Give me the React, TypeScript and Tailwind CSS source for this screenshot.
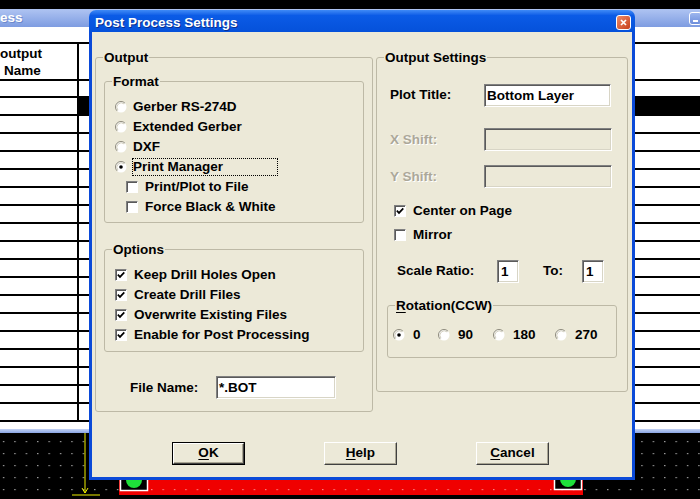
import React from "react"

// Classic sunken radio button (Win2k/XP classic look)
function Radio({ checked = false }: { checked?: boolean }) {
	return (
		<svg width="12" height="12" viewBox="0 0 12 12" className="shrink-0">
			<circle cx="6" cy="6" r="5.5" fill="#fff" />
			<path d="M2.1 9.9A5.5 5.5 0 0 1 9.9 2.1" fill="none" stroke="#8d8a7c" />
			<path d="M2.9 9.1A4.4 4.4 0 0 1 9.1 2.9" fill="none" stroke="#d2cfbf" />
			{checked && <circle cx="6" cy="6" r="1.8" fill="#000" />}
		</svg>
	)
}

function Check({ checked = false }: { checked?: boolean }) {
	return (
		<span className="w-[12px] h-[12px] shrink-0 flex items-center justify-center bg-white border border-t-[#808080] border-l-[#808080] border-r-white border-b-white shadow-[inset_1px_1px_0_#5a5a5a]">
			{checked && (
				<svg width="8" height="8" viewBox="0 0 8 8">
					<path d="M0.8 3.6L3 5.9L7.3 1.4" fill="none" stroke="#000" strokeWidth="1.7" />
				</svg>
			)}
		</span>
	)
}

function Edit({ value = "", disabled = false, className = "" }: { value?: string; disabled?: boolean; className?: string }) {
	return (
		<div
			className={`h-[23px] shrink-0 flex items-center px-[2px] pt-[1px] border border-t-[#808080] border-l-[#808080] border-r-white border-b-white shadow-[inset_1px_1px_0_#5a5a5a,inset_-1px_-1px_0_#d8d5c6] ${
				disabled ? "bg-[#ece9d8]" : "bg-white"
			} ${className}`}>
			{value}
		</div>
	)
}

function Group({
	label,
	className = "",
	legendClassName = "",
	children,
}: {
	label: React.ReactNode
	className?: string
	legendClassName?: string
	children: React.ReactNode
}) {
	return (
		<fieldset className={`border border-[#bdb9a6] rounded-[3px] ${className}`}>
			<legend className={`leading-[15px] px-[1px] ${legendClassName}`}>{label}</legend>
			{children}
		</fieldset>
	)
}

function RadioRow({ label, checked = false }: { label: string; checked?: boolean }) {
	return (
		<div className="h-[20px] flex items-center gap-[6px]">
			<Radio checked={checked} />
			<span>{label}</span>
		</div>
	)
}

function CheckRow({ label, checked = false, className = "" }: { label: string; checked?: boolean; className?: string }) {
	return (
		<div className={`h-[20px] flex items-center gap-[7px] ${className}`}>
			<Check checked={checked} />
			<span>{label}</span>
		</div>
	)
}

function Button({ children, isDefault = false }: { children: React.ReactNode; isDefault?: boolean }) {
	return (
		<button type="button" className={`w-[73px] h-[23px] flex bg-[#ece9d8] font-bold ${isDefault ? "border border-black" : ""}`}>
			<span className="flex-1 flex items-center justify-center border border-t-white border-l-white border-r-[#404040] border-b-[#404040] shadow-[inset_-1px_-1px_0_#a9a593]">
				{children}
			</span>
		</button>
	)
}

function CloseButton() {
	return (
		<span className="mt-[3px] w-[15px] h-[15px] rounded-[3px] border border-white bg-linear-to-br from-[#ee8a66] to-[#c63d17] flex items-center justify-center">
			<svg width="7" height="7" viewBox="0 0 7 7">
				<path d="M1 1L6 6M6 1L1 6" stroke="#fff" strokeWidth="1.7" />
			</svg>
		</span>
	)
}

const ROTATION_WIDTHS = ["w-[45px]", "w-[55px]", "w-[62px]", ""]

function Dialog() {
	return (
		<div className="absolute left-[89px] top-[10px] w-[546px] h-[470px] flex flex-col">
			<div className="h-[22px] shrink-0 rounded-t-[7px] bg-linear-to-b from-[#3f8af6] via-[#0b5be6] via-25% to-[#0551da] flex items-center justify-between pl-[6px] pr-[4px] text-white">
				<span className="pt-[4px] [text-shadow:1px_1px_0_#0b2f8f]">Post Process Settings</span>
				<CloseButton />
			</div>
			<div className="flex-1 flex flex-col bg-[#ece9d8] border-x-[3px] border-b-[3px] border-[#0b4ad8]">
				<div className="flex items-start gap-[3px] pl-[3px] pt-[18px]">
					{/* left: Output */}
					<Group label="Output" className="w-[278px] h-[362px] shrink-0 px-[8px] pt-[9px]" legendClassName="-ml-[1px]">
						<Group label="Format" className="pl-[10px] pt-[8px] pb-[5px]" legendClassName="-ml-[3px]">
							<RadioRow label="Gerber RS-274D" />
							<RadioRow label="Extended Gerber" />
							<RadioRow label="DXF" />
							<div className="h-[20px] flex items-center">
								<Radio checked />
								<span className="ml-[5px] w-[146px] h-[18px] flex items-center border border-dotted border-black">Print Manager</span>
							</div>
							<CheckRow label="Print/Plot to File" className="pl-[11px]" />
							<CheckRow label="Force Black & White" className="pl-[11px]" />
						</Group>
						<Group label="Options" className="mt-[19px] pl-[10px] pt-[8px] pb-[6px]" legendClassName="-ml-[3px]">
							<CheckRow checked label="Keep Drill Holes Open" className="gap-[6px]" />
							<CheckRow checked label="Create Drill Files" className="gap-[6px]" />
							<CheckRow checked label="Overwrite Existing Files" className="gap-[6px]" />
							<CheckRow checked label="Enable for Post Processing" className="gap-[6px]" />
						</Group>
						<div className="mt-[24px] h-[23px] flex items-center pl-[26px]">
							<span className="w-[86px] pt-[1px]">File Name:</span>
							<Edit className="w-[120px]" value="*.BOT" />
						</div>
					</Group>

					{/* right: Output Settings */}
					<Group label="Output Settings" className="w-[252px] h-[342px] shrink-0 pl-[13px] pt-[19px]" legendClassName="-ml-[6px]">
						<div className="h-[23px] flex items-center">
							<span className="w-[94px]">Plot Title:</span>
							<Edit className="w-[127px]" value="Bottom Layer" />
						</div>
						<div className="mt-[21px] h-[23px] flex items-center">
							<span className="w-[94px] pt-[1px] text-[#aca899] [text-shadow:1px_1px_0_#fff]">X Shift:</span>
							<Edit className="w-[128px]" disabled />
						</div>
						<div className="mt-[14px] h-[23px] flex items-center">
							<span className="w-[94px] pt-[1px] text-[#aca899] [text-shadow:1px_1px_0_#fff]">Y Shift:</span>
							<Edit className="w-[128px]" disabled />
						</div>
						<CheckRow checked label="Center on Page" className="mt-[13px] pl-[4px]" />
						<CheckRow label="Mirror" className="mt-[4px] pl-[4px]" />
						<div className="mt-[15px] h-[23px] flex items-center pl-[7px]">
							<span className="w-[100px]">Scale Ratio:</span>
							<Edit className="w-[22px] px-[3px]" value="1" />
							<span className="ml-[24px] w-[39px]">To:</span>
							<Edit className="w-[22px] px-[3px]" value="1" />
						</div>
						<Group
							label={
								<>
									<span className="underline underline-offset-[2px]">R</span>otation(CCW)
								</>
							}
							className="mt-[15px] -ml-[3px] w-[230px] pl-[5px] pt-[12px] pb-[12px]"
							legendClassName="ml-[2px]">
							<div className="h-[20px] flex items-center">
								{["0", "90", "180", "270"].map((t, i) => (
									<div key={t} className={`flex items-center gap-[8px] ${ROTATION_WIDTHS[i]}`}>
										<Radio checked={i === 0} />
										<span>{t}</span>
									</div>
								))}
							</div>
						</Group>
					</Group>
				</div>

				<div className="mt-[30px] flex gap-[79px] pl-[80px]">
					<Button isDefault>
						<span className="underline underline-offset-[2px]">O</span>K
					</Button>
					<Button>
						<span className="underline underline-offset-[2px]">H</span>elp
					</Button>
					<Button>
						<span className="underline underline-offset-[2px]">C</span>ancel
					</Button>
				</div>
			</div>
		</div>
	)
}

// PCB editor canvas peeking out below the table
function Canvas() {
	return (
		<svg width="700" height="66" className="block">
			<defs>
				<pattern id="grid" width="11.4" height="12" patternUnits="userSpaceOnUse">
					<rect x="3" y="8" width="1.2" height="1.2" fill="#b8b8b8" />
				</pattern>
				<pattern id="gridRed" width="11.4" height="12" patternUnits="userSpaceOnUse">
					<rect x="3" y="8" width="1.2" height="1.2" fill="#ff9a9a" />
				</pattern>
			</defs>
			<rect width="700" height="66" fill="#000" />
			<rect width="700" height="66" fill="url(#grid)" />
			<rect x="119" y="46" width="464" height="16" fill="#f00000" />
			<rect x="119" y="46" width="464" height="16" fill="url(#gridRed)" />
			<rect x="120.5" y="43.5" width="27" height="14" fill="#000" stroke="#fff" strokeWidth="1.5" />
			<circle cx="134" cy="47" r="8" fill="#1ee03a" />
			<rect x="554.5" y="42.5" width="27" height="14" fill="#000" stroke="#fff" strokeWidth="1.5" />
			<circle cx="568" cy="46" r="8" fill="#1ee03a" />
			<path d="M85 0V60M82 55L85 60L88 55M72 62H100" stroke="#f0f000" strokeWidth="1" fill="none" />
		</svg>
	)
}

export default function App() {
	const rows = Array.from({ length: 18 }, (_, i) => i)
	return (
		<div className="relative w-[700px] h-[499px] overflow-hidden bg-black font-['Liberation_Sans',Arial,sans-serif] text-[13.5px] font-bold text-black">
			<div className="h-[9px]" />
			{/* background window title bar */}
			<div className="h-[18px] flex items-center justify-between bg-linear-to-b from-[#afc4f2] to-[#7e9ce1] text-white">
				<span className="leading-none [text-shadow:1px_1px_0_#6d89cc]">ess</span>
				<span className="w-[13px] h-[13px] -mr-[2px] rounded-[3px] border border-white bg-linear-to-b from-[#9db6ee] to-[#6e8edb] flex items-end justify-center pb-[2px]">
					<span className="w-[5px] h-[2px] bg-white" />
				</span>
			</div>
			{/* background table */}
			<div className="h-[402px] bg-white flex flex-col">
				<div className="h-[15px] shrink-0" />
				<div className="h-[39px] shrink-0 flex border-y-2 border-black">
					<div className="w-[79px] border-r-2 border-black leading-[17px] pt-[1px]">
						<div>output</div>
						<div className="pl-[4px]">Name</div>
					</div>
				</div>
				<div className="h-[17px] shrink-0 flex border-b-2 border-black">
					<div className="w-[79px] border-r-2 border-black" />
				</div>
				{rows.map((i) => (
					<div key={i} className="h-[18px] shrink-0 flex border-b-2 border-black">
						<div className="w-[79px] border-r-2 border-black" />
						{i === 0 && <div className="flex-1 bg-black" />}
					</div>
				))}
			</div>
			<div className="h-[4px] bg-linear-to-b from-[#c4d3f4] to-[#89a4e3]" />
			<Canvas />
			<Dialog />
		</div>
	)
}
